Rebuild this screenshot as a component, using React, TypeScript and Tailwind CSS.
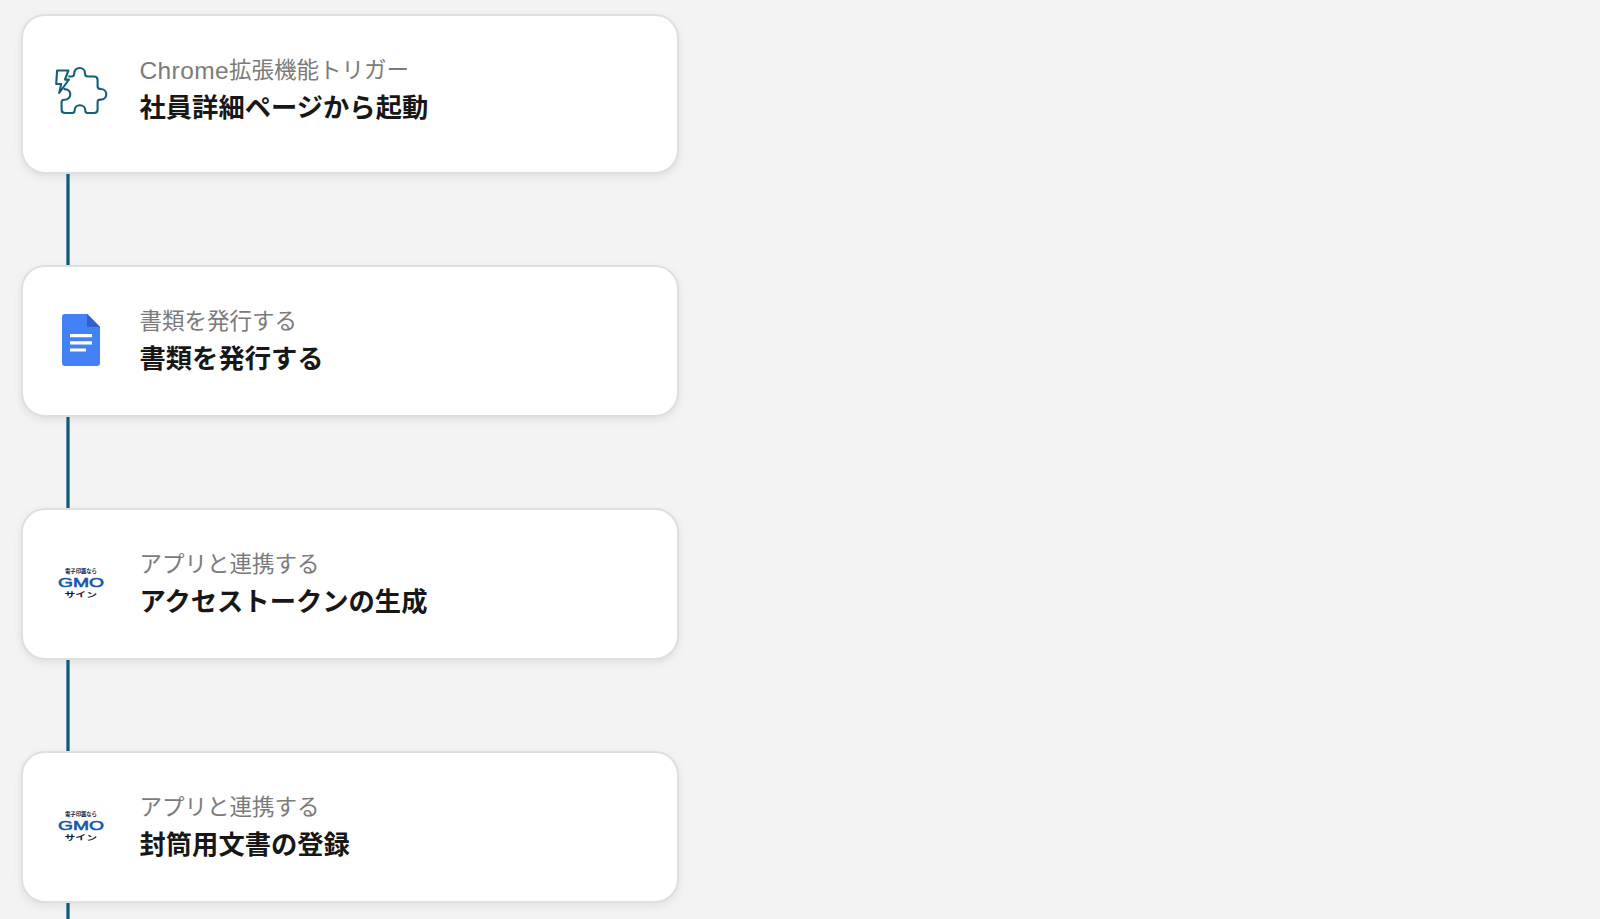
import type { ReactNode } from "react";

type Step = {
  id: string;
  prefix?: string;
  label: string;
  title: string;
  icon: ReactNode;
  cardClass: string;
};

function ExtensionIcon() {
  return (
    <svg className="overflow-visible" width="54" height="50" viewBox="-0.6 -1 54 50" fill="none" stroke="#14607c" strokeWidth="2.1" strokeLinejoin="round" strokeLinecap="round">
      <path d="M14.5 10.500H17C19 10.500 19.600 9.500 19.600 7.500C19.600 4.400 21.800 2 25 2C28.200 2 30.400 4.400 30.400 7.500C30.400 9.500 31 10.500 33 10.500H39.500C42 10.500 43 11.500 43 14V20.500C43 22.500 44 23 46 23C49.200 23 51.700 25.200 51.700 28.300C51.700 31.400 49.200 33.600 46 33.600C44 33.600 43 34.200 43 36V43.500C43 46 42 47 39.500 47H33C31 47 30.700 46 30.700 44.500C30.700 41.500 28.500 39.200 25.300 39.200C22.100 39.200 20 41.500 20 44.500C20 46 19.500 47 17.500 47H10.500C8 47 7 46 7 43.500V36C7 34.300 7.800 33.700 10 33.700C13 33.700 15.700 31.500 15.700 28.400C15.700 25.300 13.300 23.100 9.800 23.100" />
      <path d="M2.500 4.500H13.800L10.300 13.600H14.300L4.600 27L6.600 18H1.600Z" />
    </svg>
  );
}

function DocsIcon() {
  return (
    <svg className="mb-[3px]" width="38" height="52" viewBox="0 0 38 52">
      <path d="M3 0H25.500L38 13V49Q38 52 35 52H3Q0 52 0 49V3Q0 0 3 0Z" fill="#4481f4" />
      <path d="M25 0L38 13H25Z" fill="#2b62cf" />
      <path d="M8 20H30V23.200H8ZM8 27.200H30V30.400H8ZM8 34.400H24V37.600H8Z" fill="#fff" />
    </svg>
  );
}

function GmoSignIcon() {
  return (
    <svg className="mb-0.5" width="50" height="36" viewBox="0 0 50 36" fontFamily="'Liberation Sans', 'Noto Sans CJK JP', sans-serif">
      <text x="9" y="7.800" fontSize="5.400" fontWeight="700" textLength="32" fill="#1c2540">電子印鑑なら</text>
      <text x="2" y="21.800" fontSize="13" textLength="46" lengthAdjust="spacingAndGlyphs" fill="#1557ac" stroke="#1557ac" strokeWidth="0.6">GMO</text>
      <text x="8.500" y="32" fontSize="7.300" fontWeight="700" textLength="32.500" lengthAdjust="spacingAndGlyphs" fill="#10192f">サイン</text>
    </svg>
  );
}

const steps: Step[] = [
  { id: "trigger", prefix: "Chrome", label: "拡張機能トリガー", title: "社員詳細ページから起動", icon: <ExtensionIcon />, cardClass: "h-40 pb-2" },
  { id: "issue", label: "書類を発行する", title: "書類を発行する", icon: <DocsIcon />, cardClass: "h-[152px]" },
  { id: "token", label: "アプリと連携する", title: "アクセストークンの生成", icon: <GmoSignIcon />, cardClass: "h-[152px]" },
  { id: "envelope", label: "アプリと連携する", title: "封筒用文書の登録", icon: <GmoSignIcon />, cardClass: "h-[152px]" },
];

function StepCard({ step }: { step: Step }) {
  return (
    <div className={`flex w-[658px] shrink-0 items-center rounded-[24px] border-2 border-[#dfdfdf] bg-white shadow-[0_3px_8px_rgba(0,0,0,0.08)] ${step.cardClass}`}>
      <div className="ml-[30px] flex w-14 shrink-0 justify-center">{step.icon}</div>
      <div className="mb-[5px] ml-[30.5px] whitespace-nowrap">
        <p className="flex h-9 items-baseline text-[22.5px] leading-9 text-[#7b7b7b]">
          {step.prefix && <span className="translate-y-px font-['Liberation_Sans'] text-[24.5px] tracking-[0.4px]">{step.prefix}</span>}
          {step.label}
        </p>
        <p className="text-[26.3px] leading-[39px] font-bold text-[#171717]">{step.title}</p>
      </div>
    </div>
  );
}

function Connector() {
  return <div className="ml-[45px] h-[91px] w-1 shrink-0 border-x border-[#5f91a5] bg-[#0d5c7a]" />;
}

export default function App() {
  return (
    <main className="flex h-[919px] w-full flex-col items-start overflow-hidden bg-[#f3f3f3] pt-3.5 pl-[21px] font-['Noto_Sans_CJK_JP',sans-serif]">
      {steps.map((step) => (
        <div key={step.id} className="shrink-0">
          <StepCard step={step} />
          <Connector />
        </div>
      ))}
    </main>
  );
}
